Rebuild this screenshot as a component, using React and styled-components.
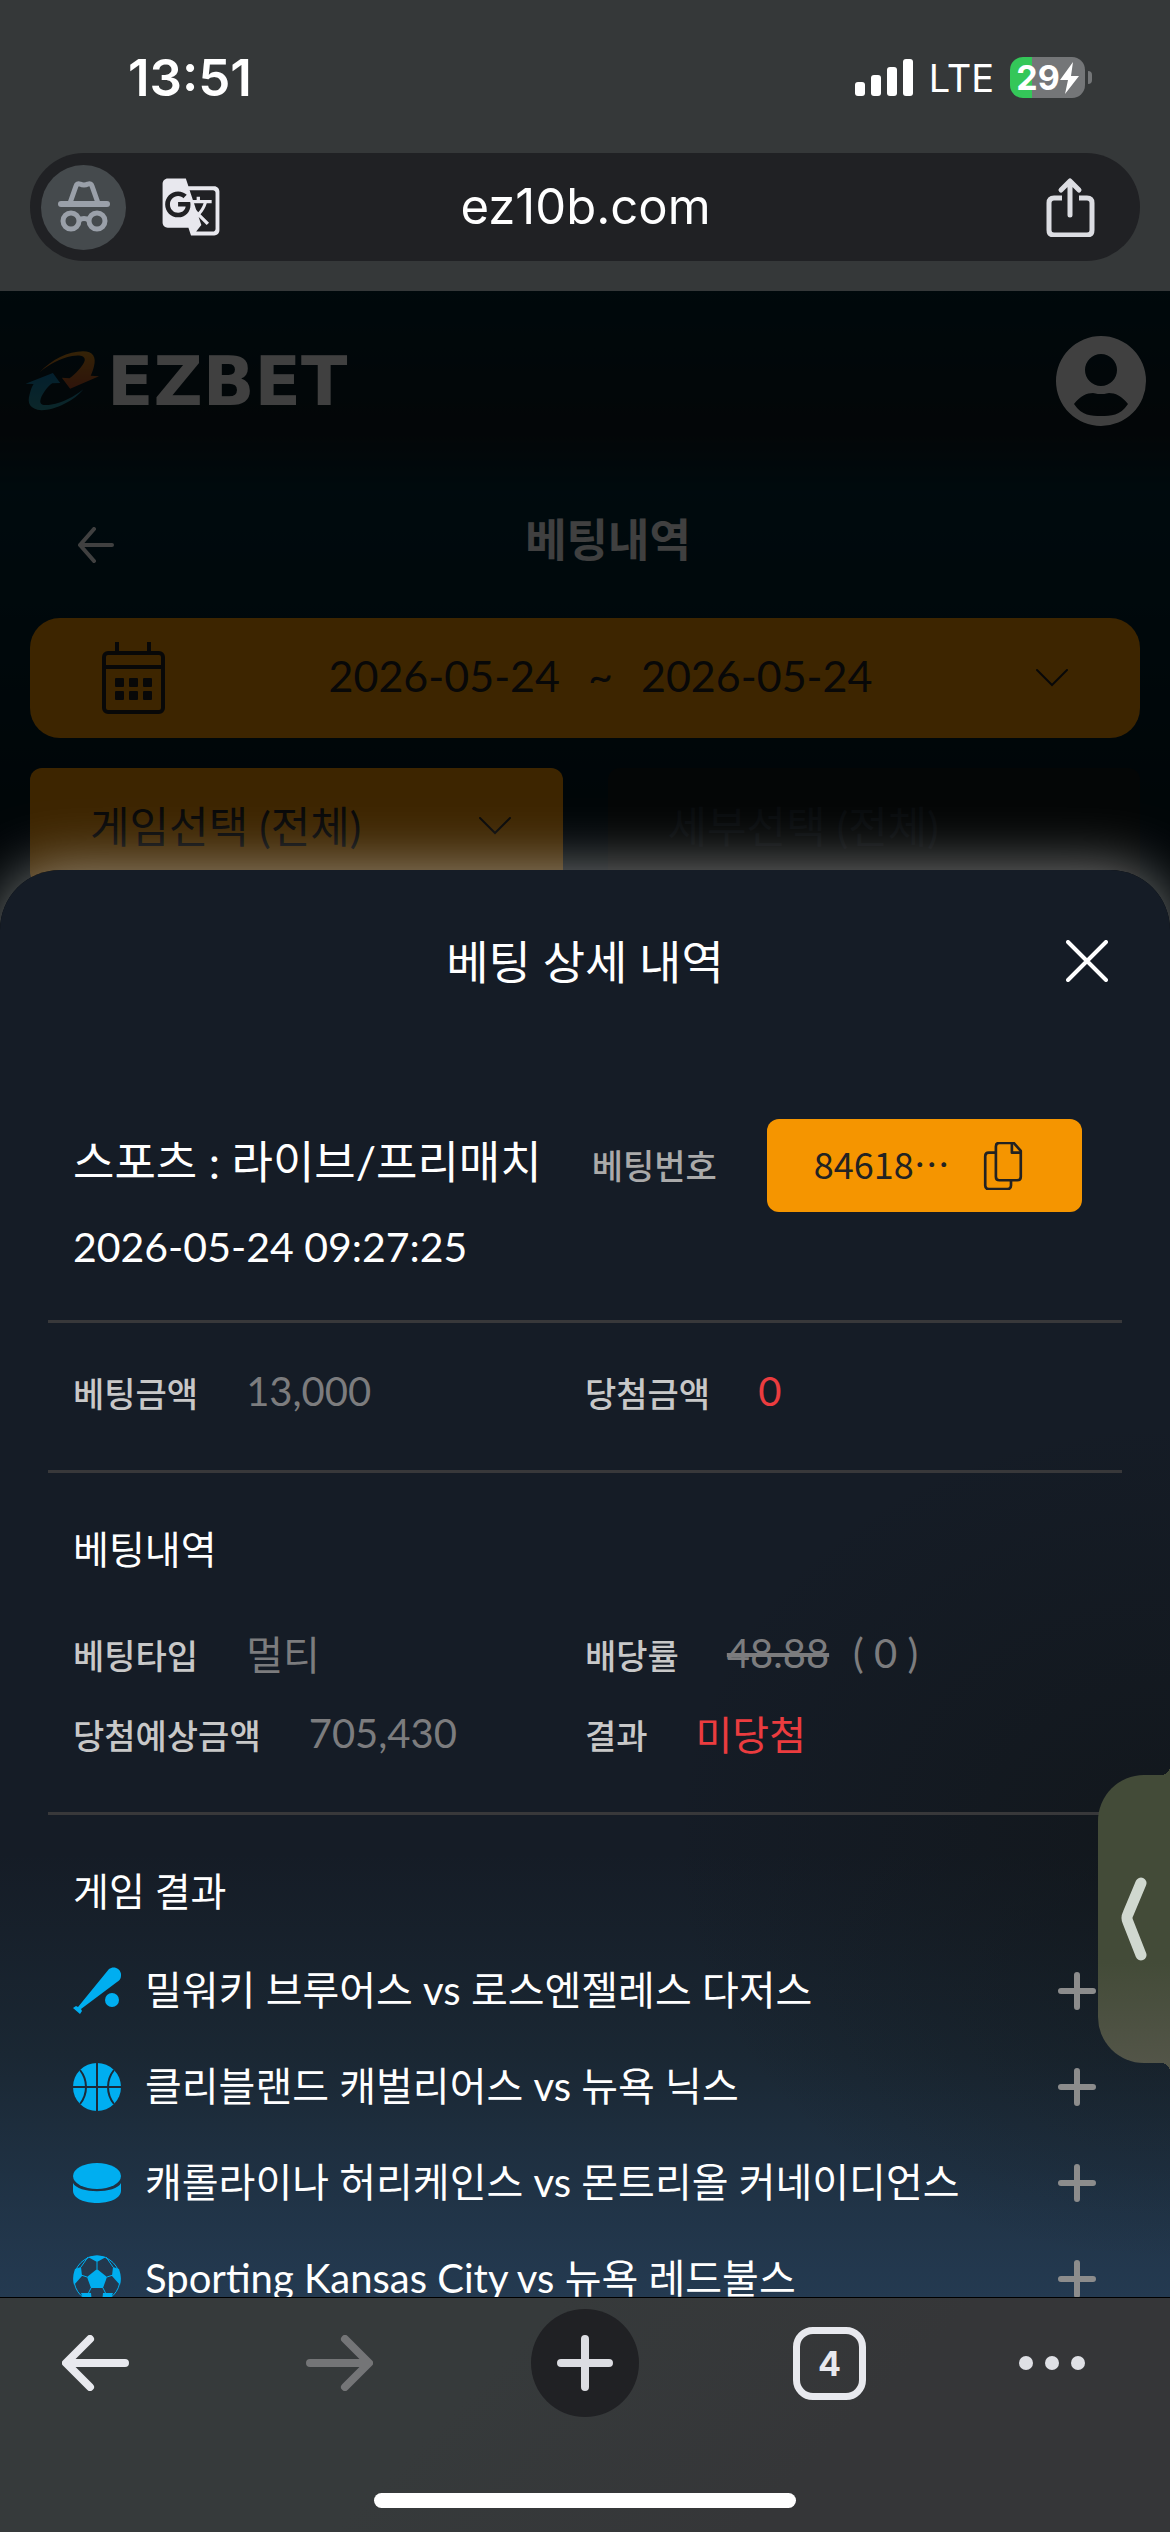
import React, { useState } from "react";
import styled, { createGlobalStyle } from "styled-components";
import { MdGTranslate } from "react-icons/md";

const details = {
  title: "스포츠 : 라이브/프리매치",
  date: "2026-05-24 09:27:25",
  number: "84618…",
};

const games = [
  { id: 1, sport: "baseball", name: "밀워키 브루어스 vs 로스엔젤레스 다저스" },
  { id: 2, sport: "basketball", name: "클리블랜드 캐벌리어스 vs 뉴욕 닉스" },
  { id: 3, sport: "hockey", name: "캐롤라이나 허리케인스 vs 몬트리올 커네이디언스" },
  { id: 4, sport: "soccer", name: "Sporting Kansas City vs 뉴욕 레드불스" },
];

const Logo = () => (
  <svg width="74" height="60" viewBox="0 0 223 180" aria-hidden="true">
    <defs>
      <linearGradient id="orange" x1="0" y1="0" x2="0" y2="1">
        <stop offset="0" stopColor="#d08a1c" />
        <stop offset="1" stopColor="#b8502a" />
      </linearGradient>
      <linearGradient id="blue" x1="0" y1="0" x2="0" y2="1">
        <stop offset="0" stopColor="#0f7cb4" />
        <stop offset="1" stopColor="#2f9aa4" />
      </linearGradient>
    </defs>
    <path
      fill="url(#orange)"
      d="M44 64C80 25 130 0 175 0c30 0 40 18 33 45-2 10-6 21-10 29l25 2-87 37-25-33 23 2c16-12 42-37 46-54 2-16-20-16-38-13-37 7-72 27-98 49Z"
    />
    <path
      fill="url(#blue)"
      d="M2 98 84 66l22 30-24 1c-16 11-34 37-36 53-1 14 16 14 34 11 32-5 68-23 96-46-26 33-84 63-126 63-36-2-44-22-36-48 3-12 6-22 12-31Z"
    />
  </svg>
);

const Incognito = () => (
  <svg width="52" height="54" viewBox="0 0 52 54" fill="none" stroke="#9aa0a9">
    <path
      d="M12 23 18 6q1-3 4-2 4 2 8 0 3-1 4 2l6 17"
      strokeWidth="5"
      strokeLinejoin="round"
    />
    <path d="M3 24h46" strokeWidth="6" strokeLinecap="round" />
    <circle cx="13" cy="41" r="8" strokeWidth="5" />
    <circle cx="39" cy="41" r="8" strokeWidth="5" />
    <path d="M21 40q5-3 10 0" strokeWidth="5" />
  </svg>
);

const Share = () => (
  <svg
    width="50"
    height="60"
    viewBox="0 0 50 60"
    fill="none"
    stroke="#dcdde2"
    strokeWidth="5"
    strokeLinecap="round"
    strokeLinejoin="round"
  >
    <path
      d="M17 21H9q-5 0-5 5v27q0 5 5 5h33q5 0 5-5V26q0-5-5-5h-8"
      strokeLinecap="butt"
    />
    <path d="M25 38V5M16 13l9-9 9 9" />
  </svg>
);

const Signal = () => (
  <svg width="58" height="38" viewBox="0 0 58 38" fill="#fff">
    <rect x="0" y="23" width="10" height="14" rx="3" />
    <rect x="16" y="16" width="10" height="21" rx="3" />
    <rect x="32" y="8" width="10" height="29" rx="3" />
    <rect x="48" y="0" width="10" height="37" rx="3" />
  </svg>
);

const Bolt = () => (
  <svg width="19" height="32" viewBox="0 0 19 32" fill="#fff">
    <path d="M13 0 0 18h8L5 32l14-18h-8Z" />
  </svg>
);

const Account = () => (
  <svg width="90" height="90" viewBox="0 0 90 90" fill="#fff">
    <path
      fillRule="evenodd"
      d="M45 0a45 45 0 1 1 0 90a45 45 0 1 1 0-90ZM45 18a16 16 0 1 0 0 32a16 16 0 1 0 0-32ZM18 68C26 80 35 80 45 80S64 80 72 68C66 60 59 57 53 57 49 58 47 58 45 58S41 58 37 57C31 57 24 60 18 68Z"
    />
  </svg>
);

const Calendar = () => (
  <svg
    width="63"
    height="72"
    viewBox="0 0 63 72"
    fill="none"
    stroke="#222"
    strokeWidth="4"
  >
    <path d="M15 0v10M47 0v10" />
    <rect x="2" y="11" width="59" height="59" rx="4" />
    <path d="M2 25h59" />
    <g fill="#222" stroke="none">
      <rect x="13" y="36" width="9" height="9" rx="1" />
      <rect x="27" y="36" width="9" height="9" rx="1" />
      <rect x="41" y="36" width="9" height="9" rx="1" />
      <rect x="13" y="49" width="9" height="9" rx="1" />
      <rect x="27" y="49" width="9" height="9" rx="1" />
      <rect x="41" y="49" width="9" height="9" rx="1" />
    </g>
  </svg>
);

const Chevron = () => (
  <svg width="32" height="18" viewBox="0 0 32 18" fill="none" stroke="#222">
    <path d="M1 1l15 15L31 1" strokeWidth="2" strokeLinecap="round" />
  </svg>
);

const PageArrow = () => (
  <svg width="36" height="36" viewBox="0 0 36 36" fill="none" stroke="#fff">
    <path
      d="M34 18H2M16 2 2 18l14 16"
      strokeWidth="4"
      strokeLinecap="round"
      strokeLinejoin="round"
    />
  </svg>
);

const Close = () => (
  <svg width="42" height="42" viewBox="0 0 42 42" stroke="#fff">
    <path d="M2 2l38 38M40 2 2 40" strokeWidth="4" strokeLinecap="round" />
  </svg>
);

const Copy = () => (
  <svg
    width="42"
    height="48"
    viewBox="0 0 42 54"
    fill="none"
    stroke="#222"
    strokeWidth="3"
    strokeLinejoin="round"
  >
    <path d="M13 12H5q-4 0-4 4v33q0 4 4 4h21q4 0 4-4v-6" />
    <path d="M17 1h16l8 9v29q0 4-4 4H17q-4 0-4-4V5q0-4 4-4Z" />
    <path d="M31 2v10h10" />
  </svg>
);

const Plus = () => (
  <svg width="40" height="40" viewBox="0 0 40 40" stroke="#8c8c8c">
    <path d="M20 4v32M4 20h32" strokeWidth="6" strokeLinecap="round" />
  </svg>
);

const ArrowIcon = ({ color, flip }) => (
  <svg width="67" height="56" viewBox="0 0 67 56" fill="none" stroke={color}>
    <path
      d={flip ? "M4 28h58M39 4l24 24-24 24" : "M63 28H5M28 4 4 28l24 24"}
      strokeWidth="8"
      strokeLinecap="round"
      strokeLinejoin="round"
    />
  </svg>
);

const SportIcon = ({ sport }) => {
  if (sport === "baseball") {
    return (
      <svg width="48" height="48" viewBox="0 0 48 48" fill="#00aef0">
        <path d="M36 2c5-4 13 0 12 7 0 3-2 5-4 6L8 42l1 2-2 3-7-6 3-2 2 1Z" />
        <circle cx="39" cy="33" r="7" />
      </svg>
    );
  }
  if (sport === "basketball") {
    return (
      <svg width="48" height="48" viewBox="0 0 48 48" fill="none">
        <circle cx="24" cy="24" r="24" fill="#00aef0" />
        <path
          d="M24 0v48M0 24h48M7 7c8 10 8 24 0 34M41 7c-8 10-8 24 0 34"
          stroke="#1c2a38"
          strokeWidth="2"
        />
      </svg>
    );
  }
  if (sport === "hockey") {
    return (
      <svg width="48" height="40" viewBox="0 0 48 40" fill="#00aef0">
        <ellipse cx="24" cy="13" rx="24" ry="13" />
        <path d="M0 20c5 11 43 11 48 0v8c-1 16-47 16-48 0Z" />
      </svg>
    );
  }
  return (
    <svg width="48" height="48" viewBox="0 0 48 48" fill="#00aef0">
      <circle cx="24" cy="24" r="23" fill="none" stroke="#00aef0" />
      <path d="m24 14 10 8-4 11H18l-4-11Z" />
      <path d="M15 2q9-3 18 0l-9 5ZM46 14q3 8 1 16l-8-9 1-9ZM2 14q-3 8-1 16l8-9-1-9ZM38 43q-6 5-9 5l1-10h10ZM10 43q6 5 9 5l-1-10H8Z" />
      <path
        d="M24 7v7M34 22l6-2M14 22l-6-2M30 33l3 6M18 33l-3 6M33 2l7 10M15 2 8 12"
        stroke="#00aef0"
        strokeWidth="1"
      />
    </svg>
  );
};

const App = () => {
  const [open, setOpen] = useState(true);

  return (
    <Phone>
      <GlobalStyle />
      <BrowserTop>
        <StatusBar>
          <Clock>13:51</Clock>
          <StatusIcons>
            <Signal />
            <Network>LTE</Network>
            <Battery>
              29
              <Bolt />
            </Battery>
          </StatusIcons>
        </StatusBar>
        <AddressBar>
          <IncognitoBadge>
            <Incognito />
          </IncognitoBadge>
          <IconButton aria-label="Translate">
            <MdGTranslate size={62} color="#e8e8ee" />
          </IconButton>
          <Address>ez10b.com</Address>
          <IconButton aria-label="Share">
            <Share />
          </IconButton>
        </AddressBar>
      </BrowserTop>

      <Site>
        <SiteHeader>
          <Brand href="#">
            <Logo />
            EZBET
          </Brand>
          <IconButton aria-label="내 정보">
            <Account />
          </IconButton>
        </SiteHeader>
        <PageTitle>
          <IconButton aria-label="뒤로">
            <PageArrow />
          </IconButton>
          <h1>베팅내역</h1>
        </PageTitle>
        <Filters>
          <DateButton>
            <Calendar />
            <DateRange>
              <span>2026-05-24</span>
              <span>~</span>
              <span>2026-05-24</span>
            </DateRange>
            <Chevron />
          </DateButton>
          <SelectBox>
            <select aria-label="게임선택">
              <option>게임선택 (전체)</option>
            </select>
            <Chevron />
          </SelectBox>
          <SelectBox $muted>
            <select aria-label="세부선택">
              <option>세부선택 (전체)</option>
            </select>
          </SelectBox>
        </Filters>

        {open && (
          <>
            <Backdrop />
            <Sheet role="dialog" aria-label="베팅 상세 내역">
              <SheetHeader>
                <h2>베팅 상세 내역</h2>
                <IconButton aria-label="닫기" onClick={() => setOpen(false)}>
                  <Close />
                </IconButton>
              </SheetHeader>

              <SheetBody>
                <Summary>
                  <SummaryTitle>{details.title}</SummaryTitle>
                  <Label $dim>베팅번호</Label>
                  <CopyButton>
                    <span>{details.number}</span>
                    <Copy />
                  </CopyButton>
                  <SummaryDate>{details.date}</SummaryDate>
                </Summary>

                <Amounts>
                  <Field>
                    <Label>베팅금액</Label>
                    <Value>13,000</Value>
                  </Field>
                  <Field>
                    <Label>당첨금액</Label>
                    <Value $lost>0</Value>
                  </Field>
                </Amounts>

                <Section>
                  <SectionTitle>베팅내역</SectionTitle>
                  <FieldGrid>
                    <Field>
                      <Label>베팅타입</Label>
                      <Value>멀티</Value>
                    </Field>
                    <Field>
                      <Label>배당률</Label>
                      <Value>
                        <s>48.88</s>
                        <span>( 0 )</span>
                      </Value>
                    </Field>
                    <Field>
                      <Label>당첨예상금액</Label>
                      <Value>705,430</Value>
                    </Field>
                    <Field>
                      <Label>결과</Label>
                      <Value $lost>미당첨</Value>
                    </Field>
                  </FieldGrid>
                </Section>

                <Section>
                  <SectionTitle>게임 결과</SectionTitle>
                  <GameList>
                    {games.map((game) => (
                      <Game key={game.id}>
                        <SportIcon sport={game.sport} />
                        <GameName>{game.name}</GameName>
                        <IconButton aria-label="펼치기">
                          <Plus />
                        </IconButton>
                      </Game>
                    ))}
                  </GameList>
                </Section>
              </SheetBody>
            </Sheet>
          </>
        )}

        <SideTab aria-label="메뉴 열기">
          <svg width="28" height="84" viewBox="0 0 28 84" fill="none">
            <path
              d="M21 6 8 37q-2 4 0 8l13 33"
              stroke="#d0d8cf"
              strokeWidth="11"
              strokeLinecap="round"
              strokeLinejoin="round"
            />
          </svg>
        </SideTab>
      </Site>

      <BrowserBottom>
        <Toolbar>
          <ToolbarLeft>
            <IconButton aria-label="Back">
              <ArrowIcon color="#e8e9ee" />
            </IconButton>
            <IconButton aria-label="Forward" disabled>
              <ArrowIcon color="#747577" flip />
            </IconButton>
          </ToolbarLeft>
          <NewTab aria-label="New tab">
            <svg width="56" height="56" viewBox="0 0 56 56" stroke="#dcdde2">
              <path d="M28 4v48M4 28h48" strokeWidth="8" strokeLinecap="round" />
            </svg>
          </NewTab>
          <ToolbarRight>
            <TabCount>4</TabCount>
            <IconButton aria-label="More">
              <svg width="68" height="16" viewBox="0 0 68 16" fill="#dfe0e5">
                <circle cx="8" cy="8" r="7" />
                <circle cx="34" cy="8" r="7" />
                <circle cx="60" cy="8" r="7" />
              </svg>
            </IconButton>
          </ToolbarRight>
        </Toolbar>
        <HomeIndicator />
      </BrowserBottom>
    </Phone>
  );
};

export default App;

const GlobalStyle = createGlobalStyle`
  * {
    box-sizing: border-box;
  }

  body {
    margin: 0;
    background-color: #363839;
    font-family: Lato, "Noto Sans CJK KR", sans-serif;
    color: #fff;
  }

  button, select {
    font: inherit;
    color: inherit;
  }

  h1, h2, h3, p, ul {
    margin: 0;
    padding: 0;
    font-weight: 400;
  }

  svg {
    display: block;
    flex: none;
  }
`;

const Phone = styled.div`
  display: flex;
  flex-direction: column;
  height: 100vh;
  overflow: hidden;
`;

const IconButton = styled.button`
  display: flex;
  padding: 0;
  border: 0;
  background: none;
  cursor: pointer;
`;

const BrowserTop = styled.header`
  padding: 0 30px 30px;
  background-color: #353839;
  font-family: Inter, sans-serif;
`;

const StatusBar = styled.div`
  display: flex;
  align-items: center;
  justify-content: space-between;
  height: 153px;
  padding: 2px 49px 0 98px;
`;

const Clock = styled.span`
  font-size: 51px;
  font-weight: 600;
`;

const StatusIcons = styled.div`
  display: flex;
  align-items: center;
  gap: 16px;
`;

const Network = styled.span`
  font-size: 38px;
`;

const Battery = styled.span`
  position: relative;
  display: flex;
  align-items: center;
  justify-content: center;
  width: 75px;
  height: 41px;
  margin-right: 6px;
  border-radius: 13px;
  background: linear-gradient(90deg, #34c759 29%, #747678 29%);
  font-size: 34px;
  font-weight: 700;

  &::after {
    content: "";
    position: absolute;
    right: -7px;
    width: 4px;
    height: 13px;
    border-radius: 0 4px 4px 0;
    background-color: #747678;
  }
`;

const AddressBar = styled.div`
  display: flex;
  align-items: center;
  height: 108px;
  padding: 0 45px 0 11px;
  border-radius: 54px;
  background-color: #202124;
`;

const IncognitoBadge = styled.span`
  display: flex;
  align-items: center;
  justify-content: center;
  width: 85px;
  height: 85px;
  margin-right: 34px;
  border-radius: 50%;
  background-color: #454a4d;
`;

const Address = styled.span`
  flex: 1;
  padding: 0 96px 2px 0;
  text-align: center;
  font-size: 49px;
`;

const Site = styled.main`
  position: relative;
  flex: 1;
  min-height: 0;
  overflow: hidden;
  border-bottom: 1px solid #000;
  background: linear-gradient(#002430 0%, #0e1a20 7%, #002a38 10%, #00141c 30%);
`;

const SiteHeader = styled.div`
  display: flex;
  align-items: center;
  justify-content: space-between;
  height: 180px;
  padding: 0 24px 0 25px;
`;

const Brand = styled.a`
  display: flex;
  align-items: center;
  gap: 8px;
  color: #fff;
  font-family: "DejaVu Sans", sans-serif;
  font-size: 68px;
  font-weight: 700;
  text-decoration: none;
`;

const PageTitle = styled.div`
  display: flex;
  align-items: center;
  height: 147px;
  padding: 0 0 0 78px;

  h1 {
    flex: 1;
    padding: 0 68px 14px 0;
    text-align: center;
    font-size: 45px;
    font-weight: 700;
  }
`;

const Filters = styled.div`
  display: grid;
  grid-template-columns: 1fr 1fr;
  gap: 30px 45px;
  padding: 0 30px;
  color: #222;
  font-size: 43px;
`;

const DateButton = styled.button`
  grid-column: 1 / -1;
  display: flex;
  align-items: center;
  justify-content: space-between;
  height: 120px;
  padding: 0 72px;
  border: 0;
  border-radius: 30px;
  background-color: #f39200;
`;

const DateRange = styled.span`
  display: flex;
  gap: 28px;
  padding-bottom: 6px;
`;

const SelectBox = styled.label`
  display: flex;
  align-items: center;
  height: 116px;
  padding: 0 52px 0 60px;
  border-radius: 12px;
  background-color: ${({ $muted }) => ($muted ? "#12181a" : "#f39200")};
  color: ${({ $muted }) => ($muted ? "#222e36" : "#222")};

  select {
    flex: 1;
    padding: 0;
    border: 0;
    appearance: none;
    background: none;
  }
`;

const Backdrop = styled.div`
  position: absolute;
  inset: 0;
  background-color: rgba(0, 0, 0, 0.75);
`;

const Sheet = styled.section`
  position: absolute;
  inset: 579px 0 0;
  overflow: hidden;
  border-radius: 60px 60px 0 0;
  background:
    radial-gradient(
      ellipse 500px 420px at 100% 68%,
      rgba(16, 20, 22, 0.6),
      rgba(16, 20, 22, 0)
    ),
    linear-gradient(
      #151c26 0%,
      #151c26 69%,
      #1a2733 83%,
      #203346 93%,
      #243a51 100%
    );
  box-shadow: 0 0 60px rgba(255, 255, 255, 0.5);
`;

const SheetHeader = styled.div`
  display: grid;
  grid-template-columns: 1fr auto 1fr;
  align-items: center;
  height: 182px;
  padding: 0 62px;

  h2 {
    grid-column: 2;
    padding-bottom: 4px;
    font-size: 46px;
  }

  button {
    justify-self: end;
  }
`;

const SheetBody = styled.div`
  padding: 67px 48px 0;
`;

const Summary = styled.div`
  display: grid;
  grid-template-columns: 1fr auto auto;
  align-items: center;
  column-gap: 50px;
  padding: 0 43px 38px 25px;
  border-bottom: 3px solid #38383a;
`;

const SummaryTitle = styled.h3`
  padding-bottom: 12px;
  font-size: 45px;
  white-space: nowrap;
`;

const SummaryDate = styled.p`
  grid-column: 1 / -1;
  font-size: 41px;
  line-height: 70px;
`;

const CopyButton = styled.button`
  display: flex;
  align-items: center;
  justify-content: space-between;
  min-width: 315px;
  height: 93px;
  padding: 0 58px 0 47px;
  border: 0;
  border-radius: 12px;
  background-color: #f59500;
  color: #222;
  font-family: "Noto Sans CJK KR", sans-serif;
  font-size: 36px;

  span {
    padding-bottom: 6px;
  }
`;

const Label = styled.span`
  padding-bottom: 2px;
  color: ${({ $dim }) => ($dim ? "#aaa" : "#c8c8c8")};
  font-size: 34px;
  font-weight: 500;
  white-space: nowrap;
`;

const Value = styled.span`
  display: flex;
  gap: 24px;
  padding-bottom: 4px;
  color: ${({ $lost }) => ($lost ? "#eb3c3f" : "#7c7c7e")};
  font-size: 40px;
`;

const Field = styled.div`
  display: flex;
  align-items: center;
  gap: 48px;
  height: 80px;
`;

const FieldGrid = styled.div`
  display: grid;
  grid-template-columns: 1fr 1fr;
`;

const Amounts = styled(FieldGrid)`
  padding: 30px 25px 37px;
  border-bottom: 3px solid #38383a;
`;

const Section = styled.div`
  padding: 46px 25px 37px;
  border-bottom: 3px solid #38383a;
`;

const SectionTitle = styled.h3`
  margin-bottom: 36px;
  font-size: 39px;
  line-height: 60px;

  ${Section}:last-child & {
    margin-bottom: 22px;
  }
`;

const GameList = styled.ul`
  list-style: none;
`;

const Game = styled.li`
  display: flex;
  align-items: center;
  gap: 24px;
  height: 96px;
`;

const GameName = styled.span`
  flex: 1;
  padding-bottom: 6px;
  font-size: 40px;
  white-space: nowrap;
`;

const SideTab = styled.button`
  position: absolute;
  top: 1484px;
  right: 0;
  display: flex;
  align-items: center;
  justify-content: center;
  width: 72px;
  height: 288px;
  padding: 0;
  border: 0;
  border-radius: 46px 0 0 46px;
  background: linear-gradient(#434b38 65%, #535548);

  &::before,
  &::after {
    content: "";
    position: absolute;
    right: 0;
    width: 9px;
    height: 9px;
  }

  &::before {
    top: -9px;
    background: radial-gradient(circle at 0 0, transparent 9px, #434b38 9px);
  }

  &::after {
    bottom: -9px;
    background: radial-gradient(circle at 0 100%, transparent 9px, #535548 9px);
  }
`;

const BrowserBottom = styled.footer`
  padding: 11px 0 24px;
  background: linear-gradient(135deg, #363a3b 40%, #353638 70%);
`;

const Toolbar = styled.nav`
  display: grid;
  grid-template-columns: 1fr auto 1fr;
  align-items: center;
`;

const ToolbarLeft = styled.div`
  display: flex;
  align-items: center;
  justify-content: space-between;
  padding: 0 158px 0 62px;
`;

const ToolbarRight = styled(ToolbarLeft)`
  padding: 0 84px 0 154px;
`;

const NewTab = styled.button`
  display: flex;
  align-items: center;
  justify-content: center;
  width: 108px;
  height: 108px;
  padding: 0;
  border: 0;
  border-radius: 50%;
  background-color: #202124;
`;

const TabCount = styled.button`
  width: 73px;
  height: 73px;
  padding: 0;
  border: 7px solid #e8e9ee;
  border-radius: 20px;
  background: none;
  color: #e8e9ee;
  font-family: Inter, sans-serif;
  font-size: 34px;
  font-weight: 700;
`;

const HomeIndicator = styled.div`
  width: 36%;
  height: 15px;
  margin: 76px auto 0;
  border-radius: 8px;
  background-color: #fff;
`;
